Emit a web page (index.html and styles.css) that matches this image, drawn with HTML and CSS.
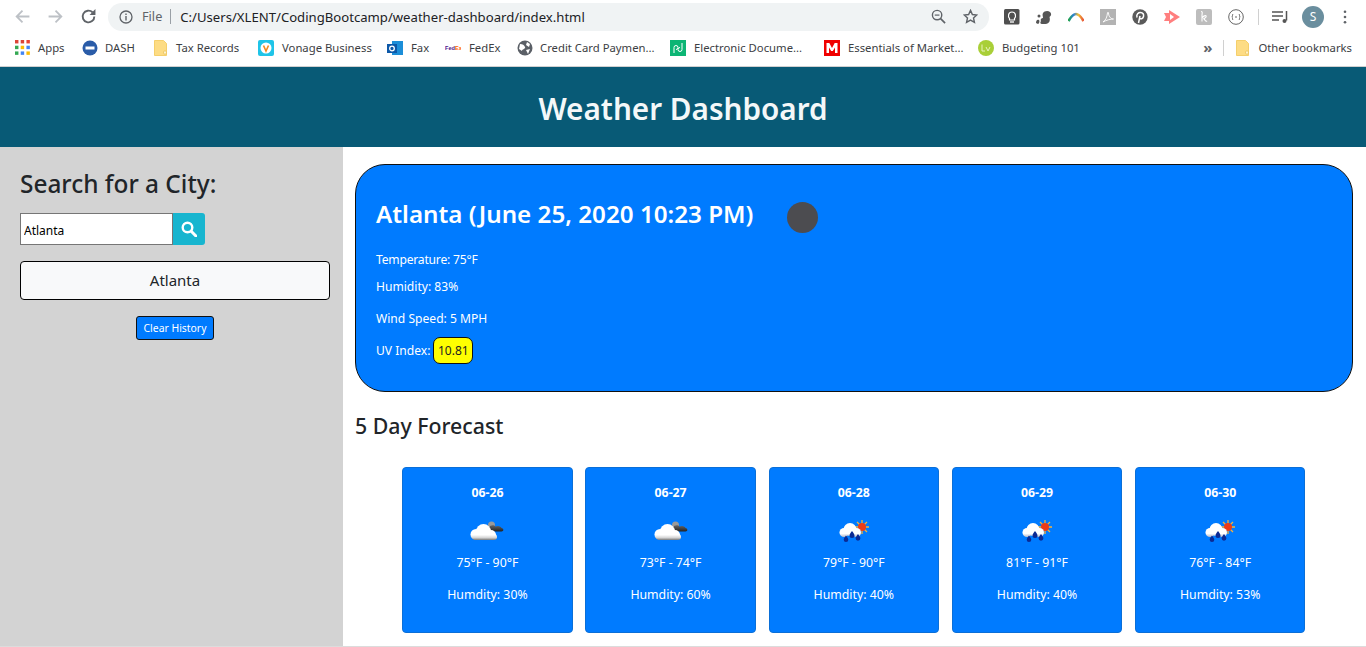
FILE: index.html
```html
<!DOCTYPE html>
<html lang="en">
<head>
<meta charset="utf-8">
<title>Weather Dashboard</title>
<link rel="stylesheet" href="styles.css">
</head>
<body>
<svg class="defs" width="0" height="0" aria-hidden="true">
  <defs>
    <linearGradient id="cloudwhite" gradientUnits="userSpaceOnUse" x1="0" y1="5" x2="0" y2="21"><stop offset="0" stop-color="#fff"/><stop offset=".68" stop-color="#fff"/><stop offset=".86" stop-color="#d4d4d4"/><stop offset="1" stop-color="#777"/></linearGradient>
    <linearGradient id="cloudwhite2" gradientUnits="userSpaceOnUse" x1="0" y1="4" x2="0" y2="18"><stop offset="0" stop-color="#fff"/><stop offset=".75" stop-color="#fff"/><stop offset="1" stop-color="#b5b8c8"/></linearGradient>
    <linearGradient id="clouddark" x1="0" y1="0" x2="0" y2="1"><stop offset="0" stop-color="#666"/><stop offset="1" stop-color="#222"/></linearGradient>
    <linearGradient id="rainbow"><stop offset="0" stop-color="#1fa34a"/><stop offset=".35" stop-color="#2a7fd8"/><stop offset=".65" stop-color="#f2c12e"/><stop offset="1" stop-color="#e8533a"/></linearGradient>
    <symbol id="folder" viewBox="0 0 13 16"><path d="M.5.5h9l3 3v12H.5z" fill="#fddc84" stroke="#f5cf6b"/><rect x="9.500" y="11" width="3" height="3" rx="1" fill="#fff3c9" stroke="#e8bd55" stroke-width=".7"/></symbol>
    <symbol id="cloudy" viewBox="0 0 36 24">
      <circle cx="22.500" cy="6" r="3.500" fill="#9a9a9a"/>
      <path d="M20 12.500c-2.500 0-2.500-3.500 0-4 1-2.500 5-3 6.500-1 3-1.500 5.500 0 6 1.500 2.500.5 2.500 3.500 0 3.500z" fill="url(#clouddark)"/>
      <g fill="url(#cloudwhite)">
        <circle cx="7" cy="15.500" r="5.500"/>
        <circle cx="14.500" cy="12.500" r="7.500"/>
        <circle cx="22" cy="16" r="5"/>
        <rect x="4" y="15" width="24" height="6" rx="3"/>
      </g>
    </symbol>
    <symbol id="rainy" viewBox="0 0 36 24">
      <g stroke="#f7b23a" stroke-width="1.300"><path d="M26 1v14M19 8h14M21 3l10 10M31 3 21 13"/></g>
      <circle cx="26" cy="8" r="4" fill="#ee3b16"/>
      <g fill="url(#cloudwhite2)">
        <circle cx="8" cy="13.500" r="4.500"/>
        <circle cx="14" cy="10.500" r="6.500"/>
        <circle cx="20.500" cy="13.500" r="4.500"/>
      </g>
      <path d="M16 12c1.800 2.500 2.500 3.500 2.500 4.500a2.500 2.500 0 0 1-5 0c0-1 .7-2 2.500-4.500zM22 15c1.700 2.300 2.400 3.400 2.400 4.300a2.400 2.400 0 0 1-4.800 0c0-.9.700-2 2.400-4.300zM10 16.500c1.600 2.200 2.300 3.200 2.300 4.200a2.300 2.300 0 0 1-4.600 0c0-1 .7-2 2.300-4.200z" fill="#0b2a94"/>
    </symbol>
  </defs>
</svg>
<header class="toolbar">
  <div class="nav">
    <svg class="nav-icon" viewBox="0 0 16 16"><path d="M14.500 8H2.500M8 2.500 2.500 8 8 13.500" fill="none" stroke="#bdc1c6" stroke-width="1.700"/></svg>
    <svg class="nav-icon" viewBox="0 0 16 16"><path d="M1.500 8h12M8 2.500 13.500 8 8 13.500" fill="none" stroke="#bdc1c6" stroke-width="1.700"/></svg>
    <svg class="nav-icon" viewBox="0 0 16 16"><path d="M13.500 8a5.500 5.500 0 1 1-1.700-4" fill="none" stroke="#5f6368" stroke-width="1.800"/><path d="M14.500 1v5.500H9z" fill="#5f6368"/></svg>
  </div>
  <div class="omnibox">
    <svg class="info" viewBox="0 0 14 14"><circle cx="7" cy="7" r="6" fill="none" stroke="#5f6368" stroke-width="1.300"/><path d="M7 6v4.500M7 3.500v1.500" stroke="#5f6368" stroke-width="1.400"/></svg>
    <span class="scheme">File</span>
    <span class="url">C:/Users/XLENT/CodingBootcamp/weather-dashboard/index.html</span>
    <span class="spacer"></span>
    <svg class="omni-icon" viewBox="0 0 16 16"><circle cx="6.500" cy="6.500" r="5" fill="none" stroke="#5f6368" stroke-width="1.500"/><path d="M10 10l5 5" stroke="#5f6368" stroke-width="1.800"/><path d="M4 6.500h5" stroke="#5f6368" stroke-width="1.300"/></svg>
    <svg class="omni-icon" viewBox="0 0 16 16"><path d="m8 1.500 2 4.400 4.700.5-3.500 3.200 1 4.700L8 11.900l-4.200 2.400 1-4.700L1.300 6.400 6 5.900z" fill="none" stroke="#5f6368" stroke-width="1.500"/></svg>
  </div>
  <div class="extensions">
    <svg class="ext" viewBox="0 0 16 16"><rect width="15.500" height="15.500" rx="1.500" fill="#4f4f4f"/><path d="M5.500 9.500C3.800 8 4 3 8 3s4.200 5 2.500 6.500V11h-5z" fill="none" stroke="#fff" stroke-width="1.200"/><path d="M6 13h4" stroke="#fff" stroke-width="1.300"/></svg>
    <svg class="ext" viewBox="0 0 16 16"><path d="M6 15c-2 0-2-2-1-3-1-1 0-3 2-3 0-2-1-3 0-5s5-3 7-1 1 4-.5 5c1 3 0 7-4 7z" fill="#555"/><path d="M0 14c0-2 1-4 3-3 1 1 0 4-1 4z" fill="#555"/><circle cx="3" cy="7" r="1.500" fill="#555"/></svg>
    <svg class="ext" viewBox="0 0 16 16"><path d="M.5 12C4 6 6 5 8 5s4 1 7.500 7" fill="none" stroke="url(#rainbow)" stroke-width="2.600"/></svg>
    <svg class="ext" viewBox="0 0 16 16"><rect width="16" height="16" fill="#b3b3b3"/><path d="M3 13c3-2 4-5 4.500-9 0-1 1-1 1 0 0 3 2 6 5 6-3 0-7 1-10.500 3z" fill="none" stroke="#fff" stroke-width=".9"/></svg>
    <svg class="ext" viewBox="0 0 16 16"><circle cx="8" cy="8" r="7.700" fill="#5a5a5a"/><path d="M6.500 14 8 7M5 8.500C4 5 6.500 3.500 8.500 3.500c2.500 0 3.500 2 3 4-.5 2.500-3 3-4 1.500" fill="none" stroke="#fff" stroke-width="1.500"/></svg>
    <svg class="ext" viewBox="0 0 16 16"><path d="M0 4h5V1l11 7-11 7v-3H0l2-4z" fill="#ff7f7f"/><path d="M6 5v6l4-3z" fill="#fff"/></svg>
    <svg class="ext" viewBox="0 0 16 16"><rect width="16" height="16" rx="2" fill="#bdbdbd"/><path d="M5 2.500c2 0 1 2 1 4v6M6 9c2-3 5-3 4-1s-3 1-2 2 2 3 3 2" fill="none" stroke="#fff" stroke-width="1.100"/></svg>
    <svg class="ext" viewBox="0 0 16 16"><circle cx="8" cy="8" r="7.300" fill="none" stroke="#666" stroke-width="1"/><path d="M5 5c-1 1 0 2.500-1.200 3C5 8.500 4 10 5 11M11 5c1 1 0 2.500 1.200 3C11 8.500 12 10 11 11M7 8h2" fill="none" stroke="#666"/></svg>
    <span class="ext-sep"></span>
    <svg class="ext" viewBox="0 0 16 16"><path d="M0 3h11M0 7h11M0 11h7M14.500 2v9.500" stroke="#555" stroke-width="1.500"/><circle cx="12.500" cy="12" r="2" fill="#555"/></svg>
    <span class="avatar">S</span>
    <svg class="menu" viewBox="0 0 4 16"><circle cx="2" cy="2" r="1.500"/><circle cx="2" cy="8" r="1.500"/><circle cx="2" cy="14" r="1.500"/></svg>
  </div>
</header>
<nav class="bookmarks">
  <a class="bm bm-apps"><svg class="fav" viewBox="0 0 14 14"><g fill="#db4437"><rect width="3" height="3"/><rect x="5" width="3" height="3"/><rect x="10" width="3" height="3" fill="#ea4335"/></g><g><rect y="5" width="3" height="3" fill="#34a853"/><rect x="5" y="5" width="3" height="3" fill="#fbbc05"/><rect x="10" y="5" width="3" height="3" fill="#4285f4"/><rect y="10" width="3" height="3" fill="#34a853"/><rect x="5" y="10" width="3" height="3" fill="#4285f4"/><rect x="10" y="10" width="3" height="3" fill="#fbbc05"/></g></svg>Apps</a>
  <a class="bm bm-dash"><svg class="fav" viewBox="0 0 16 16"><circle cx="8" cy="8" r="7.500" fill="#2a5ca8"/><rect x="3.500" y="6.500" width="9" height="3" fill="#fff"/></svg>DASH</a>
  <a class="bm bm-tax"><svg class="fav fav-folder" viewBox="0 0 13 16"><use href="#folder"/></svg>Tax Records</a>
  <a class="bm bm-vonage"><svg class="fav" viewBox="0 0 16 16"><rect width="16" height="16" rx="2" fill="#1fc4e8"/><circle cx="8" cy="8" r="5.500" fill="#fff"/><path d="M5.500 5.500 8 11l2.500-5.500" fill="none" stroke="#f28a20" stroke-width="1.600"/></svg>Vonage Business</a>
  <a class="bm bm-fax"><svg class="fav" viewBox="0 0 16 16"><rect x="5" y="1" width="11" height="14" fill="#1c8ed8"/><rect y="4" width="10" height="9" fill="#0c58a8"/><circle cx="5" cy="8.500" r="2.300" fill="none" stroke="#fff" stroke-width="1.300"/></svg>Fax</a>
  <a class="bm bm-fedex"><svg class="fav" viewBox="0 0 16 16"><text x="0" y="10" class="fedex-mark"><tspan fill="#4d148c">Fed</tspan><tspan fill="#ff6200">Ex</tspan></text></svg>FedEx</a>
  <a class="bm bm-credit"><svg class="fav" viewBox="0 0 16 16"><circle cx="8" cy="8" r="7.500" fill="#5a5f66"/><path d="M3 4c3 0 4 1 5 3S5 9 5 11l-3-2zM10 2l3 2-1 3-3-2zM9 10l4-1-2 5z" fill="#fff"/></svg>Credit Card Paymen...</a>
  <a class="bm bm-edoc"><svg class="fav" viewBox="0 0 16 16"><rect width="16" height="16" fill="#0cb574"/><path d="M4 13V7.500a2 2 0 1 1 2 2M12 3v6.500a2 2 0 1 1-2-2" fill="none" stroke="#fff" stroke-width="1"/></svg>Electronic Docume...</a>
  <a class="bm bm-mkt"><svg class="fav" viewBox="0 0 16 16"><rect width="16" height="16" fill="#f00000"/><path d="M2.500 13V3h2.800L8 8l2.700-5h2.800v10h-2.500V7.500L8.800 11H7.200L5 7.500V13z" fill="#fff"/></svg>Essentials of Market...</a>
  <a class="bm bm-budget"><svg class="fav" viewBox="0 0 16 16"><circle cx="8" cy="8" r="8" fill="#a9cf38"/><path d="M4 4.500v6.500h3M8 7l2 4 2-4" fill="none" stroke="#e8f2be" stroke-width="1"/></svg>Budgeting 101</a>
  <span class="spacer"></span>
  <span class="chevrons">»</span>
  <span class="bm-sep"></span>
  <a class="bm bm-other"><svg class="fav fav-folder" viewBox="0 0 13 16"><use href="#folder"/></svg>Other bookmarks</a>
</nav>
<h1 class="app-title">Weather Dashboard</h1>
<div class="app">
  <aside class="sidebar">
    <h2 class="search-title">Search for a City:</h2>
    <form class="search">
      <input class="search-input" type="text" value="Atlanta">
      <button class="search-btn" type="button" aria-label="Search"><svg viewBox="0 0 16 16"><circle cx="6.500" cy="6.500" r="4.800" fill="none" stroke="#fff" stroke-width="2.400"/><path d="M10.200 10.200 15 15" stroke="#fff" stroke-width="3" stroke-linecap="round"/></svg></button>
    </form>
    <button class="history-item" type="button">Atlanta</button>
    <button class="clear" type="button">Clear History</button>
  </aside>
  <main class="main">
    <section class="current">
      <div class="current-head">
        <h2 class="city">Atlanta (June 25, 2020 10:23 PM)</h2>
        <span class="current-icon"></span>
      </div>
      <p class="stat stat-temp">Temperature: 75°F</p>
      <p class="stat stat-hum">Humidity: 83%</p>
      <p class="stat stat-wind">Wind Speed: 5 MPH</p>
      <p class="stat stat-uv">UV Index: <span class="uv">10.81</span></p>
    </section>
    <h3 class="forecast-title">5 Day Forecast</h3>
    <div class="forecast">
      <article class="day"><h4>06-26</h4><svg class="wx" viewBox="0 0 36 24"><use href="#cloudy"/></svg><p>75°F - 90°F</p><p>Humdity: 30%</p></article>
      <article class="day"><h4>06-27</h4><svg class="wx" viewBox="0 0 36 24"><use href="#cloudy"/></svg><p>73°F - 74°F</p><p>Humdity: 60%</p></article>
      <article class="day"><h4>06-28</h4><svg class="wx" viewBox="0 0 36 24"><use href="#rainy"/></svg><p>79°F - 90°F</p><p>Humdity: 40%</p></article>
      <article class="day"><h4>06-29</h4><svg class="wx" viewBox="0 0 36 24"><use href="#rainy"/></svg><p>81°F - 91°F</p><p>Humdity: 40%</p></article>
      <article class="day"><h4>06-30</h4><svg class="wx" viewBox="0 0 36 24"><use href="#rainy"/></svg><p>76°F - 84°F</p><p>Humdity: 53%</p></article>
    </div>
  </main>
</div>
</body>
</html>
```
FILE: styles.css
```css
* { box-sizing: border-box; }
html, body { margin: 0; height: 647px; overflow: hidden; }
body { font-family: "Noto Sans", "Open Sans", sans-serif; color: #212529; background: #fff; display: flex; flex-direction: column; }
.defs { position: absolute; }
.spacer { flex: 1; }

.toolbar { height: 33px; flex: none; display: flex; align-items: center; }
.nav { display: flex; width: 108px; padding-left: 14px; gap: 16px; flex: none; }
.nav-icon { width: 17px; height: 17px; }
.omnibox { width: 881px; height: 28px; flex: none; background: #f0f3f4; border-radius: 14px; display: flex; align-items: center; padding: 0 11px; }
.info { width: 14px; height: 14px; margin-right: 9px; }
.scheme { color: #5f6368; padding-right: 8px; border-right: 1px solid #9aa0a6; line-height: 15px; margin-right: 9px; font-size: 12.700px; }
.url { color: #202124; font-size: 13.130px; white-space: nowrap; }
.omni-icon { width: 15px; height: 15px; margin-left: 17px; }
.extensions { display: flex; align-items: center; flex: 1; padding-left: 15px; gap: 16px; }
.ext { width: 16px; height: 16px; flex: none; }
.ext-sep { width: 1px; height: 16px; background: #d0d0d0; margin: 0 -3px 0 -2px; }
.avatar { width: 22px; height: 22px; border-radius: 50%; background: #6a8e9e; color: #fff; font-size: 12px; display: flex; align-items: center; justify-content: center; margin-left: -2px; }
.menu { width: 4px; height: 14px; fill: #5f6368; margin-left: 3px; }

.bookmarks { height: 34px; flex: none; display: flex; align-items: center; font-size: 11.300px; color: #3c4043; border-bottom: 1px solid #d0d0d0; padding-left: 15px; padding-bottom: 4px; }
.bm { display: flex; align-items: center; white-space: nowrap; flex: none; }
.fav { width: 16px; height: 16px; margin-right: 8px; flex: none; }
.bm-apps .fav, .bm-dash .fav, .bm-credit .fav { margin-right: 7px; }
.fav-folder { width: 13px; margin-right: 9px; }
.fedex-mark { font: 700 5.600px "Liberation Sans", sans-serif; }
.bm-apps { width: 67px; }
.bm-dash { width: 72px; }
.bm-tax { width: 104px; }
.bm-vonage { width: 129px; }
.bm-fax { width: 58px; }
.bm-fedex { width: 72px; }
.bm-credit { width: 153px; }
.bm-edoc { width: 154px; }
.bm-mkt { width: 154px; }
.chevrons { font-size: 15px; color: #5f6368; font-weight: 700; line-height: 1; margin-right: 11px; }
.bm-sep { width: 1px; height: 16px; background: #d0d0d0; margin-right: 12px; }
.bm-other { margin-right: 14px; }

.app-title { margin: 0; height: 80px; flex: none; background: #085a76; color: #f4f8f9; font-size: 29.700px; font-weight: 600; display: flex; align-items: center; justify-content: center; padding-top: 2px; }

.app { flex: 1; display: flex; min-height: 0; border-bottom: 1px solid #dcdcdc; }
.sidebar { width: 343px; flex: none; background: #d3d3d3; padding: 20px 13px 0 20px; display: flex; flex-direction: column; align-items: flex-start; }
.search-title { margin: 0 0 12px; font-size: 24.400px; font-weight: 500; line-height: 34px; color: #212529; }
.search { display: flex; margin-bottom: 16px; }
.search-input { width: 153px; height: 32px; border: 1px solid #767676; background: #fff; padding: 3px 3px 1px; font: 12px "Noto Sans", sans-serif; color: #000; outline: none; }
.search-btn { width: 32px; height: 32px; padding: 0; border: 0; border-radius: 0 3px 3px 0; background: #17b5cf; display: flex; align-items: center; justify-content: center; }
.search-btn svg { width: 16px; height: 16px; }
.history-item { width: 310px; height: 39px; background: #f8f9fa; border: 1px solid #000; border-radius: 4px; font: 15px "Noto Sans", sans-serif; color: #212529; padding: 0 0 2px; margin-bottom: 16px; }
.clear { width: 78px; height: 24px; align-self: center; background: #007bff; color: #fff; border: 1px solid #111; border-radius: 3px; font: 10.400px "Noto Sans", sans-serif; padding: 0; }

.main { flex: 1; min-width: 0; padding: 17px 13px 0 12px; }
.current { height: 228px; background: #007bff; color: #fff; border: 1px solid #111; border-radius: 30px; padding: 30px 20px; }
.current-head { display: flex; align-items: flex-start; margin-bottom: 18px; }
.city { margin: 0; font-size: 24.200px; font-weight: 600; line-height: 38px; }
.current-icon { width: 31px; height: 31px; border-radius: 50%; background: #4c4c50; margin: 7px 0 0 34px; }
.stat { margin: 0; font-size: 12.100px; line-height: 18px; }
.stat-temp { letter-spacing: -.2px; }
.stat-hum { margin-top: 9px; }
.stat-wind { margin-top: 14px; }
.stat-uv { margin-top: 9px; display: flex; align-items: center; gap: 3px; }
.uv { background: #ff0; color: #222; border: 1px solid #111; border-radius: 7px; padding: 0 3.500px; line-height: 25px; height: 27px; font-size: 12px; }
.forecast-title { margin: 19px 0 27px; font-size: 21.300px; font-weight: 500; line-height: 29px; color: #212529; }
.forecast { display: flex; justify-content: center; gap: 12.800px; padding-right: .4px; }
.day { width: 170.400px; height: 166px; background: #007bff; color: #fff; border-radius: 4px; border: 1px solid #0a6fd8; text-align: center; padding-top: 16px; display: flex; flex-direction: column; align-items: center; }
.day h4 { margin: 0; font-size: 12.300px; font-weight: 700; line-height: 18px; }
.wx { width: 36px; height: 24px; margin: 17px 0 11px; }
.day p { margin: 0 0 14px; font-size: 12.300px; line-height: 18px; }
```
